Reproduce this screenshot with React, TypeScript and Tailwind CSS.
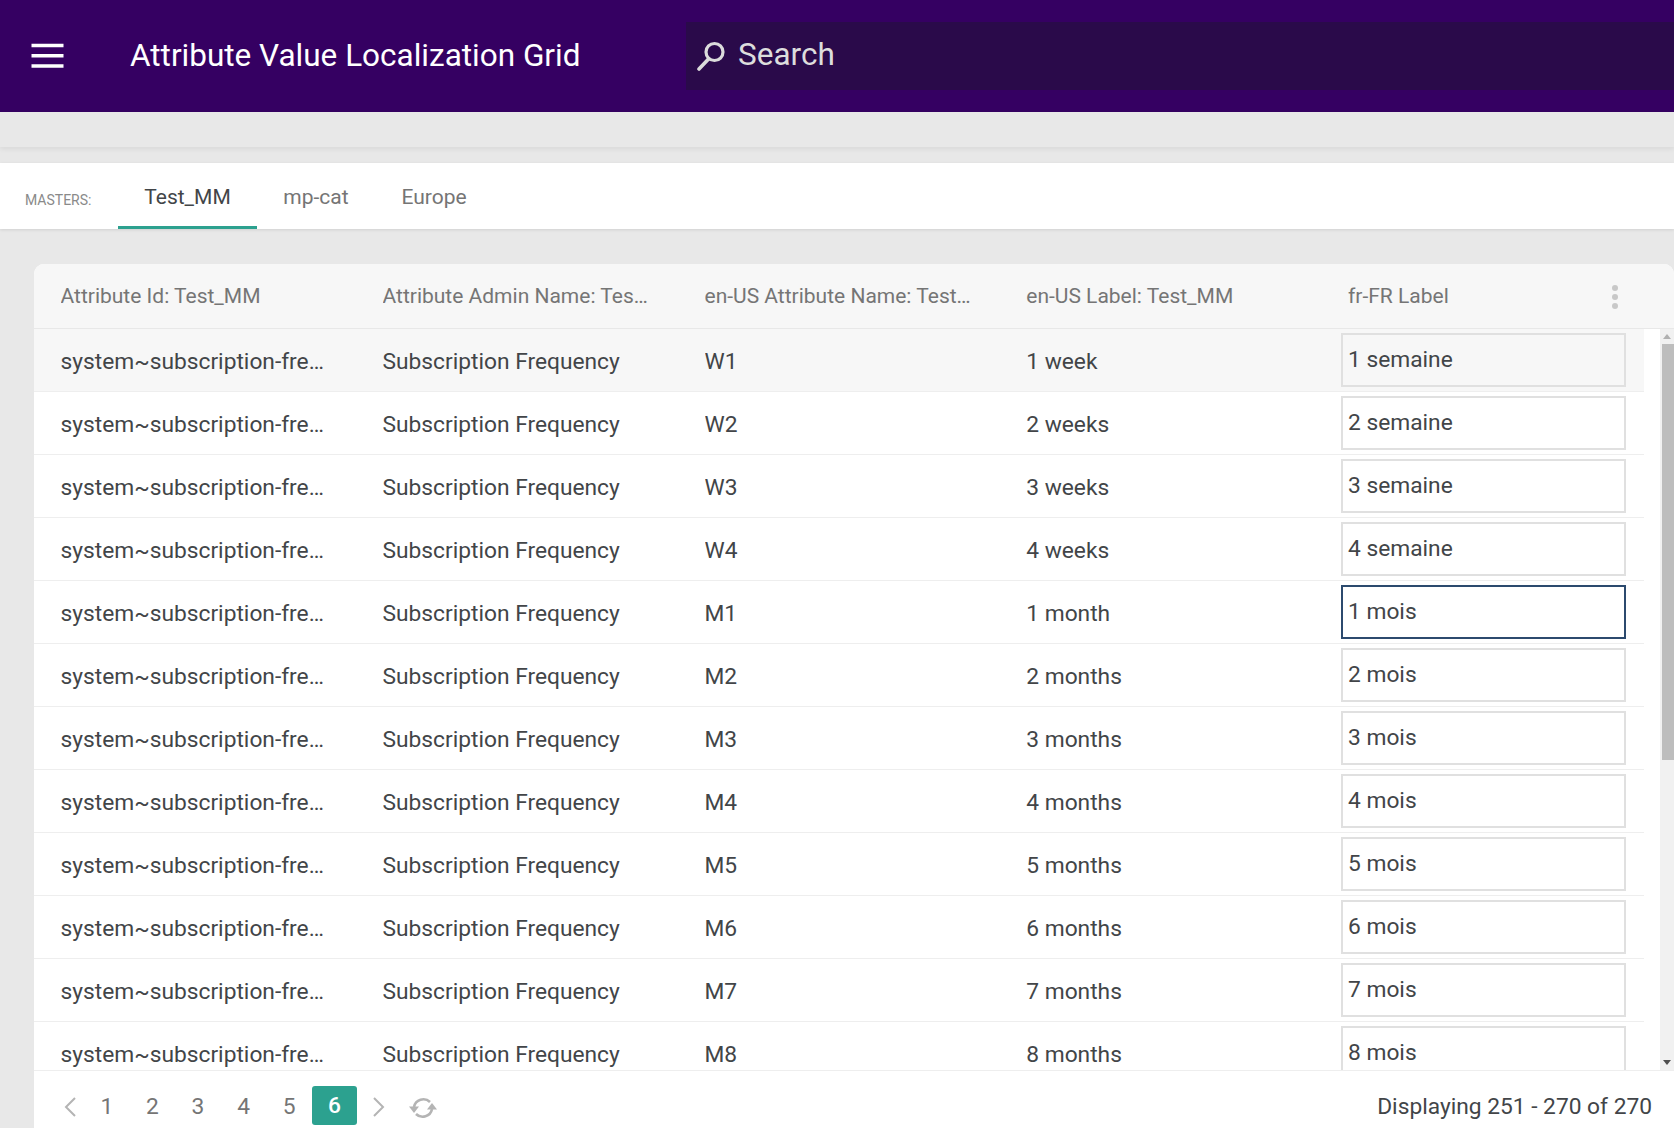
const ROWS: [string, string, string][] = [
  ["W1", "1 week", "1 semaine"],
  ["W2", "2 weeks", "2 semaine"],
  ["W3", "3 weeks", "3 semaine"],
  ["W4", "4 weeks", "4 semaine"],
  ["M1", "1 month", "1 mois"],
  ["M2", "2 months", "2 mois"],
  ["M3", "3 months", "3 mois"],
  ["M4", "4 months", "4 mois"],
  ["M5", "5 months", "5 mois"],
  ["M6", "6 months", "6 mois"],
  ["M7", "7 months", "7 mois"],
  ["M8", "8 months", "8 mois"],
];

function Row({ row, index }: { row: [string, string, string]; index: number }) {
  const focused = index === 4;
  const hovered = index === 0;
  return (
    <div className={`flex h-[63px] shrink-0 items-center border-b border-[#eeeeee] pl-[26.5px] text-[22.75px] text-[#424548] ${hovered ? "bg-[#f7f7f7]" : "bg-white"}`}>
      <div className="w-[322px] shrink-0 truncate pr-[54px] pt-[5px]">system~subscription-frequency</div>
      <div className="w-[322px] shrink-0 truncate pt-[5px]">Subscription Frequency</div>
      <div className="w-[321.75px] shrink-0 truncate pt-[5px]">{row[0]}</div>
      <div className="w-[314.5px] shrink-0 truncate pt-[5px]">{row[1]}</div>
      <div className={`flex h-[54px] w-[285px] shrink-0 items-center border-2 pl-[5.25px] pt-[1px] ${focused ? "border-[#2c4a6e] bg-white" : hovered ? "border-[#e0e0e0] bg-[#f7f7f7]" : "border-[#e0e0e0] bg-white"}`}>
        {row[2]}
      </div>
    </div>
  );
}

export default function App() {
  return (
    <div className="flex h-[1128px] w-[1674px] flex-col overflow-hidden bg-[#e8e8e8] font-['Roboto',sans-serif]">
      <header className="flex h-[112px] shrink-0 items-center bg-[#350062]">
        <svg className="ml-[31px] h-[26px] w-[33px]" viewBox="0 0 33 26">
          <path d="M0.5 2.5H32.5M0.5 12.8H32.5M0.5 23H32.5" stroke="#ffffff" strokeWidth="3.6" strokeLinecap="butt" />
        </svg>
        <div className="ml-[66px] mb-[1px] w-[556px] text-[31.5px] text-white">Attribute Value Localization Grid</div>
        <div className="flex h-[68px] flex-1 items-center bg-[#2a0a4a]">
          <svg className="ml-[10px] h-[30px] w-[30px]" viewBox="0 0 30 30" fill="none">
            <circle cx="18.5" cy="11" r="8.5" stroke="#dcdcdc" strokeWidth="3.2" />
            <path d="M12.5 18L3 28" stroke="#dcdcdc" strokeWidth="3.6" strokeLinecap="round" />
          </svg>
          <div className="ml-[12px] mb-[2px] text-[31.5px] text-[#dddddd]">Search</div>
        </div>
      </header>
      <div className="h-[35px] shrink-0 bg-[#e8e8e8] shadow-[0_2px_5px_rgba(0,0,0,0.07)]" />
      <nav className="mt-[16px] flex h-[66px] shrink-0 bg-white shadow-[0_1px_3px_rgba(0,0,0,0.1)]">
        <div className="ml-[25px] mt-[27px] w-[93px] text-[14px] text-[#8a8a8a]">MASTERS:</div>
        <div className="flex h-full w-[139px] items-center justify-center border-b-[3px] border-[#2ca18f] pt-[7px] text-[21px] text-[#424548]">Test_MM</div>
        <div className="ml-[6px] flex h-full w-[106px] items-center justify-center pt-[4px] text-[21px] text-[#757575]">mp-cat</div>
        <div className="ml-[12px] flex h-full w-[106px] items-center justify-center pt-[4px] text-[21px] text-[#757575]">Europe</div>
      </nav>
      <main className="mt-[35px] ml-[34px] flex min-h-0 flex-1 flex-col overflow-hidden rounded-tl-[10px] rounded-tr-[10px] bg-white">
        <div className="flex h-[65px] shrink-0 items-center border-b border-[#e8e8e8] bg-[#f7f7f7] pl-[26.5px] pt-[2px] text-[21px] text-[#757575]">
          <div className="w-[322px] shrink-0 truncate pr-[40px]">Attribute Id: Test_MM</div>
          <div className="w-[322px] shrink-0 truncate pr-[54px]">Attribute Admin Name: Test_MM</div>
          <div className="w-[321.75px] shrink-0 truncate pr-[54px]">en-US Attribute Name: Test_MM</div>
          <div className="w-[321.75px] shrink-0 truncate pr-[40px]">en-US Label: Test_MM</div>
          <div className="flex w-[280px] shrink-0 items-center">
            <div className="w-[264px]">fr-FR Label</div>
            <svg className="h-[24px] w-[6px]" viewBox="0 0 6 24" fill="#c8c8c8">
              <circle cx="3" cy="3" r="3" />
              <circle cx="3" cy="12" r="3" />
              <circle cx="3" cy="21" r="3" />
            </svg>
          </div>
        </div>
        <div className="flex min-h-0 flex-1">
          <div className="flex w-[1610px] shrink-0 flex-col overflow-hidden">
            {ROWS.map((row, i) => (
              <Row key={row[0]} row={row} index={i} />
            ))}
          </div>
          <div className="ml-[16px] flex w-[14px] flex-col bg-[#f1f1f1]">
            <div className="flex h-[15px] items-center justify-center">
              <svg className="h-[5px] w-[8px]" viewBox="0 0 8 5" fill="#b0b0b0"><path d="M4 0L8 5H0Z" /></svg>
            </div>
            <div className="ml-[2px] h-[416px] bg-[#bdbdbd]" />
            <div className="flex-1" />
            <div className="flex h-[15px] items-center justify-center">
              <svg className="h-[5px] w-[8px]" viewBox="0 0 8 5" fill="#505050"><path d="M0 0H8L4 5Z" /></svg>
            </div>
          </div>
        </div>
        <div className="flex h-[58px] shrink-0 items-center border-t border-[#eeeeee] bg-white pl-[30px] pt-[12px] text-[22.75px]">
          <svg className="mt-[2px] h-[20px] w-[12px]" viewBox="0 0 12 20" fill="none" stroke="#b4b4b4" strokeWidth="2"><path d="M11 1L2 10L11 19" /></svg>
          <div className="ml-[8px] flex items-center text-[#757575]">
            {["1", "2", "3", "4", "5"].map((n) => (
              <div key={n} className="flex h-[39px] w-[45.6px] items-center justify-center pt-[3px]">{n}</div>
            ))}
            <div className="flex h-[39px] w-[45px] items-center justify-center rounded-[3px] bg-[#2ca18f] pt-[2px] font-medium text-white">6</div>
          </div>
          <svg className="ml-[16px] mt-[2px] h-[20px] w-[12px]" viewBox="0 0 12 20" fill="none" stroke="#b4b4b4" strokeWidth="2"><path d="M1 1L10 10L1 19" /></svg>
          <svg className="ml-[24px] mt-[4px] h-[22px] w-[28px]" viewBox="0 0 28 22" fill="none">
            <path d="M5 10A9.5 9.5 0 0 1 21 5" stroke="#b4b4b4" strokeWidth="2.6" />
            <path d="M23 12A9.5 9.5 0 0 1 7 17" stroke="#b4b4b4" strokeWidth="2.6" />
            <path d="M0 9.5H10L5 16Z" fill="#b4b4b4" />
            <path d="M18 12.5H28L23 6Z" fill="#b4b4b4" />
          </svg>
          <div className="ml-auto pr-[22px] pt-[4px] text-[#424548]">Displaying 251 - 270 of 270</div>
        </div>
      </main>
    </div>
  );
}
